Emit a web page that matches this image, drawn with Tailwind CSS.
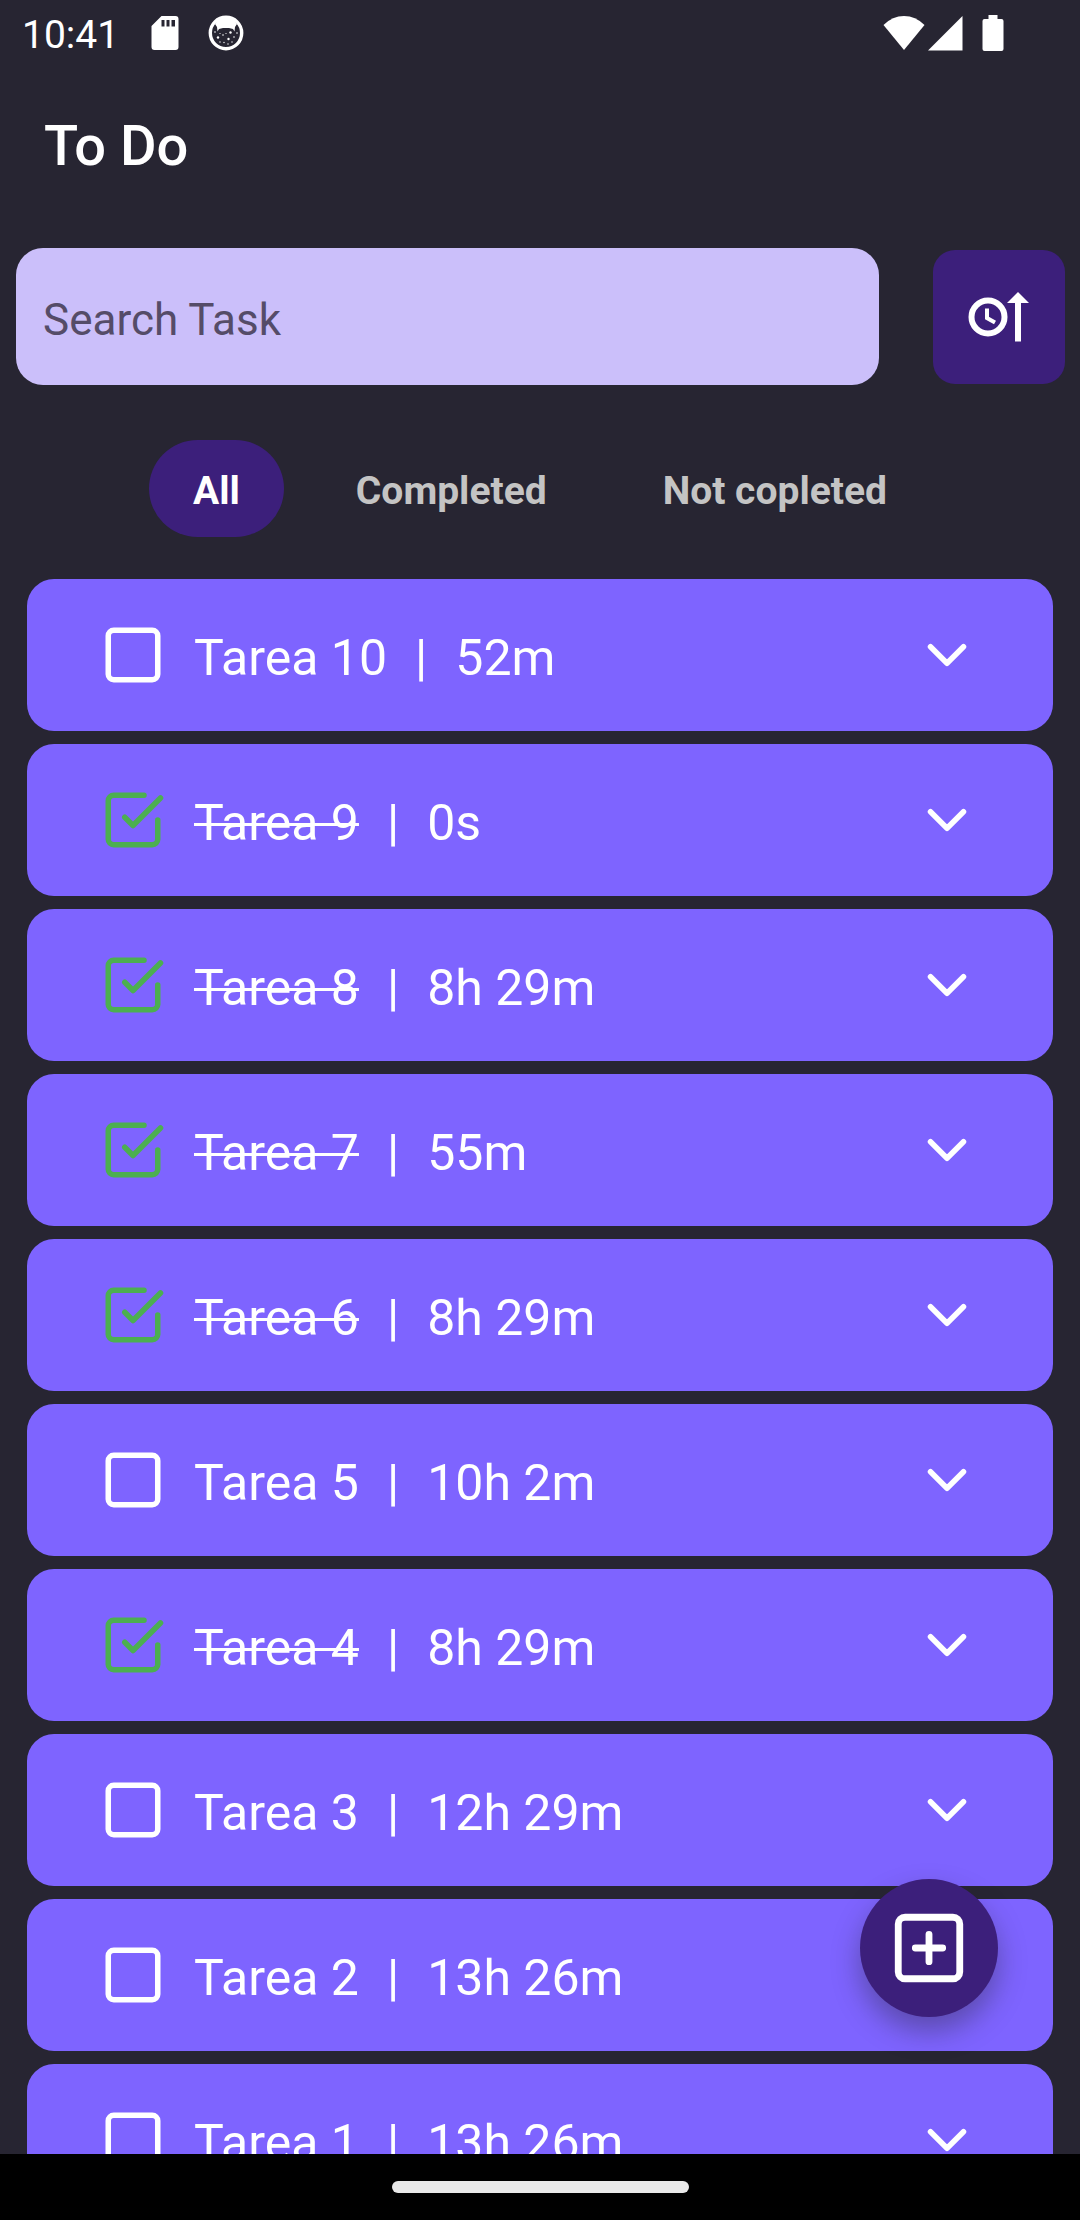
<!DOCTYPE html>
<html lang="en">
<head>
<meta charset="utf-8">
<meta name="viewport" content="width=device-width, initial-scale=1">
<title>To Do</title>
<script src="https://cdn.jsdelivr.net/npm/@tailwindcss/browser@4"></script>
</head>
<body class="bg-[#272532] font-['Roboto',sans-serif] text-white">
<div class="relative flex h-screen flex-col overflow-hidden">
  <!-- System status bar -->
  <div class="flex h-[66px] shrink-0 items-center justify-between pr-[76px] pl-[22px]">
    <div class="flex items-center">
      <span class="pt-1 text-[39px] leading-[62px]">10:41</span>
      <svg class="ml-8 h-[36px] w-[28px]" viewBox="0 0 28 36" aria-hidden="true">
        <path fill="#fff" fill-rule="evenodd" d="M10.500 1H24.500a3 3 0 0 1 3 3V32a3 3 0 0 1-3 3H3.500a3 3 0 0 1-3-3V11zM10.500 5v6.500h3V5zM15.500 5v6.500h3V5zM20.500 5v6.500h3.500V5z"/>
      </svg>
      <svg class="ml-[29px] h-[36px] w-[36px]" viewBox="0 0 36 36" aria-hidden="true">
        <circle cx="18" cy="18" r="15.700" fill="none" stroke="#fff" stroke-width="3.400"/>
        <path fill="#fff" d="M7 9Q11 2 18 2T29 9L27 12 26.500 16.500 25 14 21 13H15L11 14 9.500 16.500 9 12z"/>
        <g fill="#fff"><circle cx="10" cy="22.500" r="1.200"/><circle cx="20.500" cy="24" r="1.200"/><circle cx="22.500" cy="17.500" r="1.200"/><circle cx="15" cy="20" r=".8"/><circle cx="18" cy="18.500" r=".6"/><circle cx="26" cy="22" r=".8"/><circle cx="7" cy="17" r=".8"/><circle cx="29" cy="18" r=".8"/><circle cx="12" cy="27" r=".7"/><circle cx="16" cy="27.500" r=".7"/><circle cx="24" cy="27" r=".7"/><circle cx="20" cy="29" r=".7"/><circle cx="12" cy="18.500" r=".6"/></g>
      </svg>
    </div>
    <div class="flex items-center">
      <svg class="h-[36px] w-[42px]" viewBox="0 0 42 36" aria-hidden="true"><path fill="#fff" d="M.5 10Q9.500 1 21 1T41.500 10L21 35z"/></svg>
      <svg class="ml-[3px] h-[36px] w-[35px]" viewBox="0 0 35 36" aria-hidden="true"><path fill="#fff" d="M34.500 1V35.500H0z"/></svg>
      <svg class="ml-[19px] h-[36px] w-[22px]" viewBox="0 0 22 36" aria-hidden="true"><path fill="#fff" d="M6.500 0h9v4H19.500a2 2 0 0 1 2 2V34a2 2 0 0 1-2 2H2.500a2 2 0 0 1-2-2V6a2 2 0 0 1 2-2h4z"/></svg>
    </div>
  </div>

  <header class="flex h-[154px] shrink-0 items-center px-11 pt-[6px]">
    <h1 class="text-[56px] leading-[64px] font-medium">To Do</h1>
  </header>

  <main class="flex min-h-0 flex-1 flex-col overflow-hidden pt-7">
    <div class="flex shrink-0 items-center gap-[54px] pr-[15px] pl-4">
      <input type="text" aria-label="Search Task" placeholder="Search Task" class="h-[137px] min-w-0 flex-1 rounded-[27px] bg-[#cbbffa] px-[27px] pt-[6px] text-[44px] text-[#272532] outline-none placeholder:text-[#554c68]">
      <button type="button" aria-label="Sort by time" class="flex h-[134px] w-[132px] shrink-0 items-center justify-center rounded-[22px] bg-[#3c1f7b]">
        <svg class="h-[66px] w-[66px]" viewBox="0 0 66 66" fill="none" stroke="#fff" aria-hidden="true">
          <circle cx="22" cy="33" r="16.500" stroke-width="6"/>
          <path stroke-width="4" d="M21 24.500V34l8 4.500"/>
          <path stroke-width="6" d="M52 16V57.500"/>
          <path fill="#fff" stroke="none" d="M52 8L63 19H41z"/>
        </svg>
      </button>
    </div>

    <nav class="mt-[55px] flex shrink-0 justify-center gap-7 text-[39px] leading-[91px] font-bold text-[#c4c4c4]">
      <button type="button" class="rounded-full bg-[#3c1f7b] px-11 pt-[6px] text-white">All</button>
      <button type="button" class="px-11 pt-[6px]">Completed</button>
      <button type="button" class="px-11 pt-[6px]">Not copleted</button>
    </nav>

    <ul id="tasks" class="mt-[42px] flex flex-col gap-[13px] px-[27px]"></ul>
  </main>

  <!-- System navigation bar -->
  <div class="flex h-[66px] shrink-0 items-center justify-center bg-black">
    <div class="h-3 w-[297px] rounded-full bg-[#e9e9e9]"></div>
  </div>

  <button type="button" aria-label="Add task" class="absolute right-[82px] bottom-[203px] flex h-[138px] w-[138px] items-center justify-center rounded-full bg-[#3c1f7b] shadow-[0_14px_28px_rgba(39,37,50,0.4)]">
    <svg class="h-[82px] w-[82px]" viewBox="0 0 24 24" fill="none" stroke="#fff" stroke-width="2" stroke-linecap="round" stroke-linejoin="round" aria-hidden="true"><rect x="3" y="3" width="18" height="18" rx="2"/><path d="M12 8v8M8 12h8"/></svg>
  </button>
</div>

<script>
  const tasks = [
    ["Tarea 10", "52m", false],
    ["Tarea 9", "0s", true],
    ["Tarea 8", "8h 29m", true],
    ["Tarea 7", "55m", true],
    ["Tarea 6", "8h 29m", true],
    ["Tarea 5", "10h 2m", false],
    ["Tarea 4", "8h 29m", true],
    ["Tarea 3", "12h 29m", false],
    ["Tarea 2", "13h 26m", false],
    ["Tarea 1", "13h 26m", false],
  ];
  document.getElementById("tasks").innerHTML = tasks.map(([name, time, done], i) => `
    <li class="flex h-[152px] shrink-0 items-center justify-between rounded-[27px] bg-[#7e64ff] px-[73px]">
      <div class="flex items-center gap-7">
        <span class="grid h-[66px] w-[66px]">
          <input type="checkbox" id="task-${i}" ${done ? "checked" : ""} class="peer col-start-1 row-start-1 appearance-none">
          <svg class="pointer-events-none col-start-1 row-start-1 block peer-checked:hidden" viewBox="0 0 24 24" fill="none" stroke="#fff" stroke-width="2" aria-hidden="true"><rect x="3" y="3" width="18" height="18" rx="2"/></svg>
          <svg class="pointer-events-none col-start-1 row-start-1 hidden peer-checked:block" viewBox="0 0 24 24" fill="none" stroke="#4caf50" stroke-width="2" stroke-linecap="round" stroke-linejoin="round" aria-hidden="true"><path d="M9 11l3 3L22 4M21 12v7a2 2 0 0 1-2 2H5a2 2 0 0 1-2-2V5a2 2 0 0 1 2-2h11"/></svg>
        </span>
        <label for="task-${i}" class="flex gap-7 pt-[6px] text-[50px] leading-[60px] whitespace-nowrap"><span class="${done ? "line-through decoration-[3px]" : ""}">${name}</span><span>|</span><span>${time}</span></label>
      </div>
      <button type="button" aria-label="Show details of ${name}">
        <svg class="h-[66px] w-[66px]" viewBox="0 0 24 24" fill="none" stroke="#fff" stroke-width="2" stroke-linecap="round" stroke-linejoin="round" aria-hidden="true"><path d="M6 9l6 6 6-6"/></svg>
      </button>
    </li>`).join("");
</script>
</body>
</html>
